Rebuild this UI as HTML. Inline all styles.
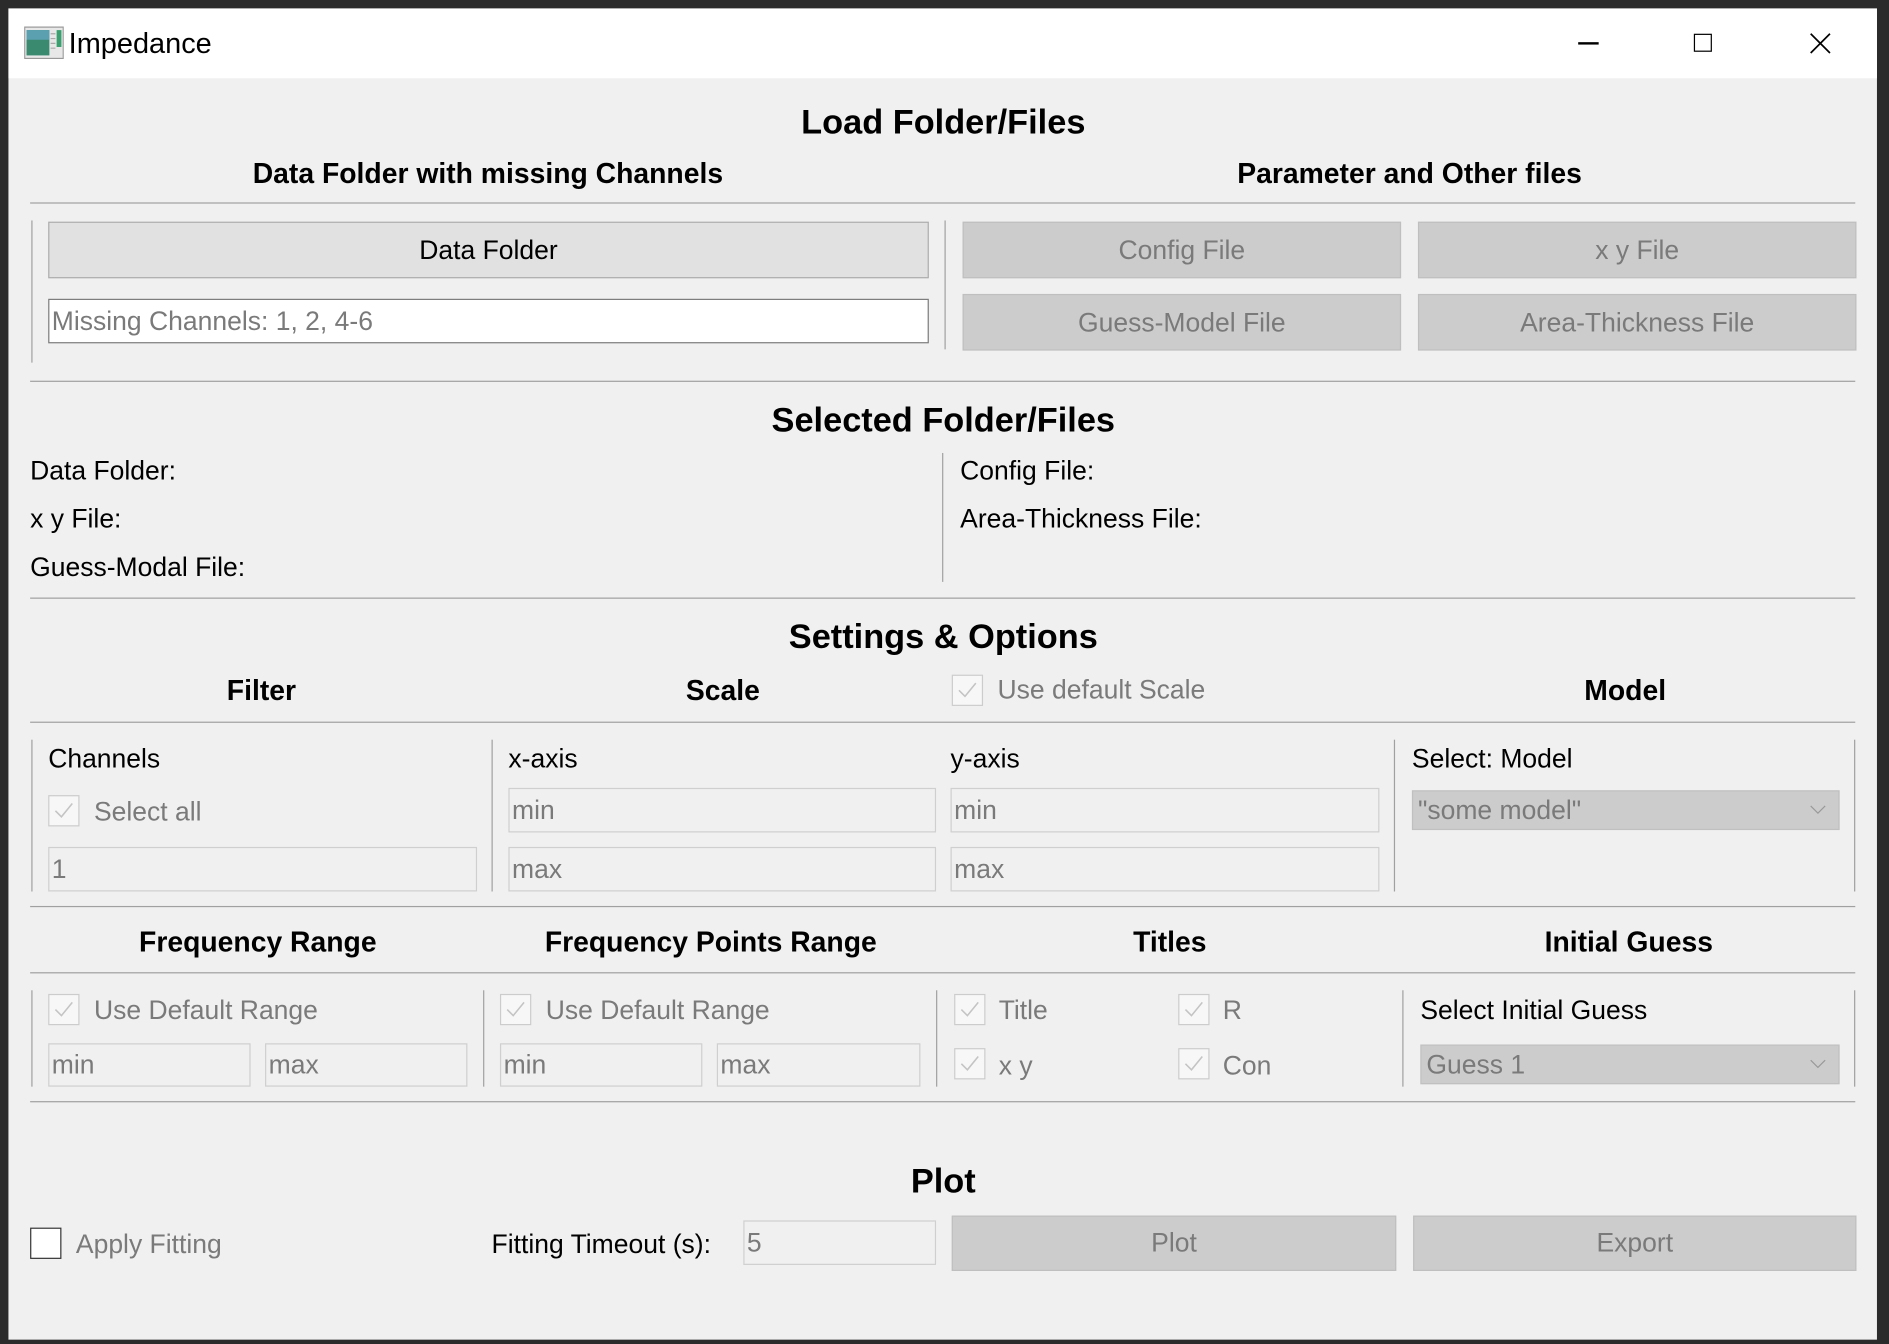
<!DOCTYPE html>
<html><head><meta charset="utf-8"><style>
html,body{margin:0;padding:0;background:#2b2b2b;width:1889px;height:1344px;overflow:hidden}
#s{position:absolute;left:0;top:0;width:1568px;height:1116px;transform:scale(1.20472);transform-origin:0 0;font-family:"Segoe UI","Liberation Sans",sans-serif;}
.a{position:absolute}
#win{left:7px;top:7px;width:1551px;height:1105px;background:#f0f0f0}
#tb{left:7px;top:7px;width:1551px;height:58px;background:#fff}
.t{position:absolute;font-size:22px;line-height:24px;white-space:nowrap;color:#000;transform:translateY(-11px)}
.c{transform:translate(-50%,-11px)}
.b{font-weight:bold;font-size:23.5px}
.h1{font-size:28.5px;font-weight:bold;line-height:30px;transform:translate(-50%,-14px)}
.g{color:#7a7a7a}
.hr{position:absolute;height:1px;background:#a0a0a0;left:25px;width:1515px}
.vl{position:absolute;width:1px;background:#a0a0a0}
.btn{position:absolute;box-sizing:border-box;border:1px solid #bfbfbf;background:#cccccc;color:#7a7a7a;font-size:22px;display:flex;align-items:center;justify-content:center}
.en{background:#e1e1e1;border-color:#adadad;color:#000}
.in{position:absolute;box-sizing:border-box;border:1px solid #cfcfcf;background:#f0f0f0;color:#7a7a7a;font-size:22px;padding-left:2px;display:flex;align-items:center}
.cb{position:absolute;box-sizing:border-box;width:26px;height:26px;border:1px solid #cccccc;background:#f7f7f7}
.cb svg{position:absolute;left:3px;top:3px}
.cmb{position:absolute;box-sizing:border-box;border:1px solid #c0c0c0;background:#cccccc;color:#7a7a7a;font-size:22px;padding-left:4px;display:flex;align-items:center}
.cmb svg{position:absolute;right:10px;top:11px}
</style></head><body><div id="s">
<div class="a" id="win"></div>
<div class="a" id="tb"></div>
<svg class="a" style="left:20px;top:22px" width="33" height="27"><rect x="0.5" y="0.5" width="32" height="26" fill="#e8e8e8" stroke="#999"/><rect x="2" y="3" width="19" height="21" fill="#3a8a70"/><rect x="2" y="3" width="19" height="8" fill="#5aa0b0"/><rect x="27" y="3" width="4" height="14" fill="#3aa070"/><line x1="22" y1="6" x2="26" y2="6" stroke="#aaa"/><line x1="22" y1="10" x2="26" y2="10" stroke="#aaa"/><line x1="22" y1="14" x2="26" y2="14" stroke="#aaa"/><line x1="22" y1="18" x2="26" y2="18" stroke="#aaa"/></svg>
<div class="t" style="left:57px;top:36px;font-size:24px">Impedance</div>
<div class="a" style="left:1310px;top:35px;width:17px;height:1.5px;background:#000"></div>
<div class="a" style="left:1406px;top:28px;width:13px;height:13px;border:1.5px solid #000"></div>
<svg class="a" style="left:1502px;top:27px" width="18" height="18"><path d="M1 1L17 17M17 1L1 17" stroke="#000" stroke-width="1.4"/></svg>

<div class="t h1" style="left:783px;top:101px">Load Folder/Files</div>
<div class="t c b" style="left:405px;top:143px">Data Folder with missing Channels</div>
<div class="t c b" style="left:1170px;top:143px">Parameter and Other files</div>
<div class="hr" style="top:168px"></div>
<div class="vl" style="left:26px;top:183px;height:118px"></div>
<div class="vl" style="left:784px;top:183px;height:107px"></div>
<div class="btn en" style="left:40px;top:184px;width:731px;height:47px">Data Folder</div>
<div class="in" style="left:40px;top:248px;width:731px;height:37px;background:#fff;border-color:#7a7a7a">Missing Channels: 1, 2, 4-6</div>
<div class="btn" style="left:799px;top:184px;width:364px;height:47px">Config File</div>
<div class="btn" style="left:1177px;top:184px;width:364px;height:47px">x y File</div>
<div class="btn" style="left:799px;top:244px;width:364px;height:47px">Guess-Model File</div>
<div class="btn" style="left:1177px;top:244px;width:364px;height:47px">Area-Thickness File</div>
<div class="hr" style="top:316px"></div>

<div class="t h1" style="left:783px;top:348px">Selected Folder/Files</div>
<div class="t" style="left:25px;top:390px">Data Folder:</div>
<div class="t" style="left:25px;top:430px">x y File:</div>
<div class="t" style="left:25px;top:470px">Guess-Modal File:</div>
<div class="vl" style="left:782px;top:376px;height:107px"></div>
<div class="t" style="left:797px;top:390px">Config File:</div>
<div class="t" style="left:797px;top:430px">Area-Thickness File:</div>
<div class="hr" style="top:496px"></div>

<div class="t h1" style="left:783px;top:528px">Settings &amp; Options</div>
<div class="t c b" style="left:217px;top:572px">Filter</div>
<div class="t c b" style="left:600px;top:572px">Scale</div>
<div class="cb" style="left:790px;top:560px"><svg width="18" height="18"><path d="M2 9L7 14L16 3" fill="none" stroke="#c4c4c4" stroke-width="1.3"/></svg></div>
<div class="t g" style="left:828px;top:572px">Use default Scale</div>
<div class="t c b" style="left:1349px;top:572px">Model</div>
<div class="hr" style="top:599px"></div>
<div class="vl" style="left:26px;top:614px;height:126px"></div>
<div class="vl" style="left:408px;top:614px;height:126px"></div>
<div class="vl" style="left:1157px;top:614px;height:126px"></div>
<div class="vl" style="left:1539px;top:614px;height:126px"></div>
<div class="t" style="left:40px;top:629px">Channels</div>
<div class="cb" style="left:40px;top:660px"><svg width="18" height="18"><path d="M2 9L7 14L16 3" fill="none" stroke="#c4c4c4" stroke-width="1.3"/></svg></div>
<div class="t g" style="left:78px;top:673px">Select all</div>
<div class="in" style="left:40px;top:703px;width:356px;height:37px">1</div>
<div class="t" style="left:422px;top:629px">x-axis</div>
<div class="in" style="left:422px;top:654px;width:355px;height:37px">min</div>
<div class="in" style="left:422px;top:703px;width:355px;height:37px">max</div>
<div class="t" style="left:789px;top:629px">y-axis</div>
<div class="in" style="left:789px;top:654px;width:356px;height:37px">min</div>
<div class="in" style="left:789px;top:703px;width:356px;height:37px">max</div>
<div class="t" style="left:1172px;top:629px">Select: Model</div>
<div class="cmb" style="left:1172px;top:656px;width:355px;height:33px">"some model"<svg width="14" height="9"><path d="M1 1L7 7L13 1" fill="none" stroke="#999" stroke-width="1"/></svg></div>
<div class="hr" style="top:752px"></div>

<div class="t c b" style="left:214px;top:781px">Frequency Range</div>
<div class="t c b" style="left:590px;top:781px">Frequency Points Range</div>
<div class="t c b" style="left:971px;top:781px">Titles</div>
<div class="t c b" style="left:1352px;top:781px">Initial Guess</div>
<div class="hr" style="top:807px"></div>
<div class="vl" style="left:26px;top:822px;height:80px"></div>
<div class="vl" style="left:401px;top:822px;height:80px"></div>
<div class="vl" style="left:777px;top:822px;height:80px"></div>
<div class="vl" style="left:1164px;top:822px;height:80px"></div>
<div class="vl" style="left:1539px;top:822px;height:80px"></div>
<div class="cb" style="left:40px;top:825px"><svg width="18" height="18"><path d="M2 9L7 14L16 3" fill="none" stroke="#c4c4c4" stroke-width="1.3"/></svg></div>
<div class="t g" style="left:78px;top:838px">Use Default Range</div>
<div class="in" style="left:40px;top:866px;width:168px;height:36px">min</div>
<div class="in" style="left:220px;top:866px;width:168px;height:36px">max</div>
<div class="cb" style="left:415px;top:825px"><svg width="18" height="18"><path d="M2 9L7 14L16 3" fill="none" stroke="#c4c4c4" stroke-width="1.3"/></svg></div>
<div class="t g" style="left:453px;top:838px">Use Default Range</div>
<div class="in" style="left:415px;top:866px;width:168px;height:36px">min</div>
<div class="in" style="left:595px;top:866px;width:169px;height:36px">max</div>
<div class="cb" style="left:792px;top:825px"><svg width="18" height="18"><path d="M2 9L7 14L16 3" fill="none" stroke="#c4c4c4" stroke-width="1.3"/></svg></div>
<div class="t g" style="left:829px;top:838px">Title</div>
<div class="cb" style="left:978px;top:825px"><svg width="18" height="18"><path d="M2 9L7 14L16 3" fill="none" stroke="#c4c4c4" stroke-width="1.3"/></svg></div>
<div class="t g" style="left:1015px;top:838px">R</div>
<div class="cb" style="left:792px;top:870px"><svg width="18" height="18"><path d="M2 9L7 14L16 3" fill="none" stroke="#c4c4c4" stroke-width="1.3"/></svg></div>
<div class="t g" style="left:829px;top:884px">x y</div>
<div class="cb" style="left:978px;top:870px"><svg width="18" height="18"><path d="M2 9L7 14L16 3" fill="none" stroke="#c4c4c4" stroke-width="1.3"/></svg></div>
<div class="t g" style="left:1015px;top:884px">Con</div>
<div class="t" style="left:1179px;top:838px">Select Initial Guess</div>
<div class="cmb" style="left:1179px;top:867px;width:348px;height:33px">Guess 1<svg width="14" height="9"><path d="M1 1L7 7L13 1" fill="none" stroke="#999" stroke-width="1"/></svg></div>
<div class="hr" style="top:914px"></div>

<div class="t h1" style="left:783px;top:980px">Plot</div>
<div class="cb" style="left:25px;top:1019px;border-color:#333;background:#fff"></div>
<div class="t g" style="left:63px;top:1032px">Apply Fitting</div>
<div class="t" style="left:408px;top:1032px">Fitting Timeout (s):</div>
<div class="in" style="left:617px;top:1013px;width:160px;height:37px">5</div>
<div class="btn" style="left:790px;top:1009px;width:369px;height:46px">Plot</div>
<div class="btn" style="left:1173px;top:1009px;width:368px;height:46px">Export</div>
</div></body></html>
